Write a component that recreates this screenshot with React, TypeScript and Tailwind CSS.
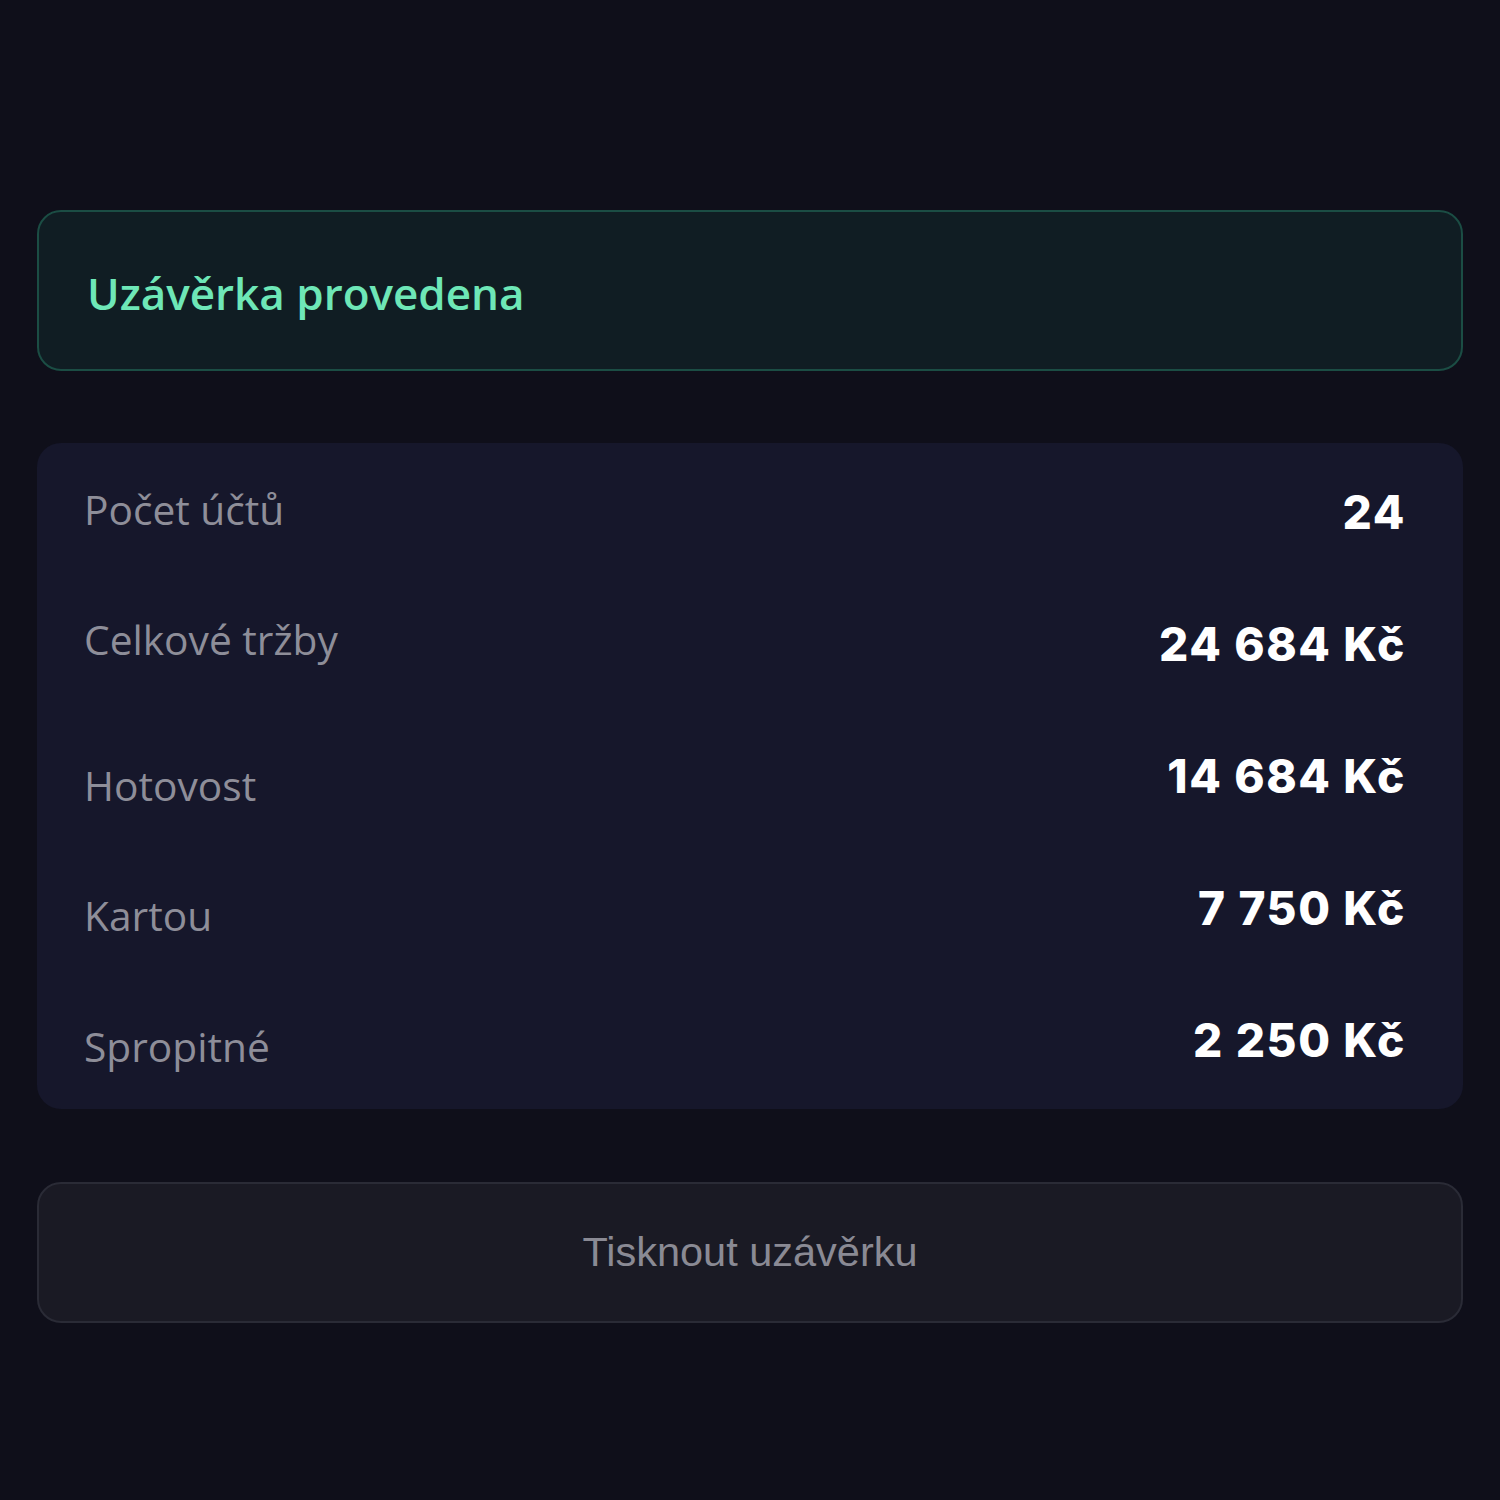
import React from "react";

const rows = [
  { label: "Počet účtů", value: "24", lc: "pb-[4px]" },
  { label: "Celkové tržby", value: "24 684 Kč", lc: "pb-[8px]" },
  { label: "Hotovost", value: "14 684 Kč", lc: "pt-[20px]" },
  { label: "Kartou", value: "7 750 Kč", lc: "pt-[16px]" },
  { label: "Spropitné", value: "2 250 Kč", lc: "pt-[14px]" },
];

export default function App() {
  return (
    <div className="min-h-[1500px] w-full bg-[#0f0f1a] px-[37px] pt-[210px]">
      <div className="flex h-[161px] items-center rounded-[24px] border-2 border-[#1b4d44] bg-[#101d23] px-[48px]">
        <span
          className="pt-[4px] text-[44px] font-semibold text-[#6ee7b7]"
          style={{ fontFamily: '"Open Sans", "Noto Sans", sans-serif' }}
        >
          Uzávěrka provedena
        </span>
      </div>

      <div className="mt-[72px] rounded-[24px] bg-[#16172b] pb-[3px] pl-[47px] pr-[57px] pt-[3px]">
        {rows.map((r) => (
          <div key={r.label} className="flex h-[132px] items-center justify-between">
            <span
              className={`text-[40.7px] text-[#8e8e99] ${r.lc}`}
              style={{ fontFamily: '"Open Sans", "Noto Sans", sans-serif' }}
            >
              {r.label}
            </span>
            <span
              className="text-[46px] font-extrabold tracking-[1.6px] text-white"
              style={{ fontFamily: 'Inter, "Noto Sans", sans-serif' }}
            >
              {r.value}
            </span>
          </div>
        ))}
      </div>

      <button className="mt-[73px] flex h-[141px] w-full items-center justify-center rounded-[24px] border-2 border-[#2a2b36] bg-[#1a1a24]">
        <span
          className="text-[41.5px] text-[#8a8a94]"
          style={{ fontFamily: '"Liberation Sans", Arial, sans-serif' }}
        >
          Tisknout uzávěrku
        </span>
      </button>
    </div>
  );
}
